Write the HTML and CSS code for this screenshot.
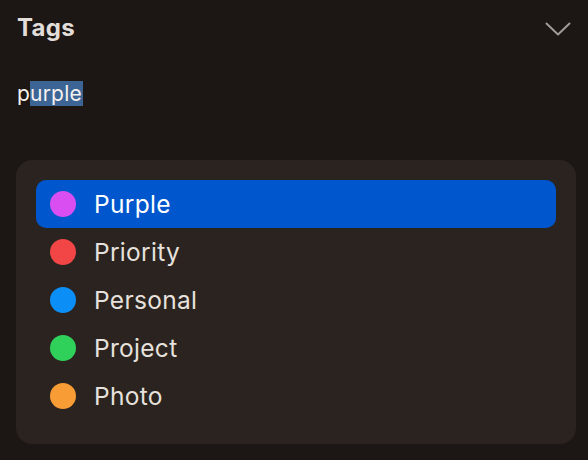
FILE: index.html
```html
<!DOCTYPE html>
<html>
<head>
<meta charset="utf-8">
<link rel="stylesheet" href="styles.css">
</head>
<body>
<div class="page">
  <div class="header">
    <h1 class="title">Tags</h1>
    <svg class="chevron" width="26" height="14" viewBox="0 0 26 14"><path d="M1.5 1.5 L13 12.5 L24.5 1.5" fill="none" stroke="#a19b97" stroke-width="2" stroke-linecap="round" stroke-linejoin="round"/></svg>
  </div>
  <div class="input"><span>p</span><span class="sel">urple</span></div>
  <div class="menu">
    <div class="item active"><span class="dot purple"></span><span class="label">Purple</span></div>
    <div class="item"><span class="dot red"></span><span class="label">Priority</span></div>
    <div class="item"><span class="dot blue"></span><span class="label">Personal</span></div>
    <div class="item"><span class="dot green"></span><span class="label">Project</span></div>
    <div class="item"><span class="dot orange"></span><span class="label">Photo</span></div>
  </div>
</div>
</body>
</html>
```
FILE: styles.css
```css
html, body {
  margin: 0;
  padding: 0;
  background: #1c1614;
  width: 588px;
  height: 460px;
  overflow: hidden;
  font-family: Inter, "Noto Sans", sans-serif;
}
.page {
  padding: 12px 12px 0 16px;
}
.header {
  display: flex;
  justify-content: space-between;
  align-items: center;
  height: 32px;
  padding: 0 5px 0 1px;
}
.title {
  margin: 0;
  font-size: 24px;
  font-weight: 700;
  color: #e2ddd9;
  line-height: 32px;
  letter-spacing: 0.3px;
}
.chevron {
  display: block;
  margin-top: 2px;
}
.input {
  margin-top: 36px;
  padding-left: 1px;
  font-size: 21px;
  line-height: 28px;
  color: #f4f1ee;
  height: 28px;
  letter-spacing: 0.2px;
}
.sel {
  background: #3c6596;
  padding-right: 1px;
}
.menu {
  margin-top: 52px;
  background: #2a231f;
  border-radius: 16px;
  padding: 20px 20px 24px 20px;
}
.item {
  display: flex;
  align-items: center;
  height: 48px;
  border-radius: 10px;
  padding-left: 14px;
  gap: 18px;
}
.item.active {
  background: #0056cc;
}
.dot {
  width: 26px;
  height: 26px;
  border-radius: 50%;
  flex: none;
}
.purple { background: #d84ef0; }
.red { background: #f24646; }
.blue { background: #0b8ff7; }
.green { background: #30d15a; }
.orange { background: #f89c36; }
.label {
  font-size: 24.5px;
  color: #e6e1dc;
  letter-spacing: 0.3px;
}
.item.active .label {
  color: #ffffff;
}
```
